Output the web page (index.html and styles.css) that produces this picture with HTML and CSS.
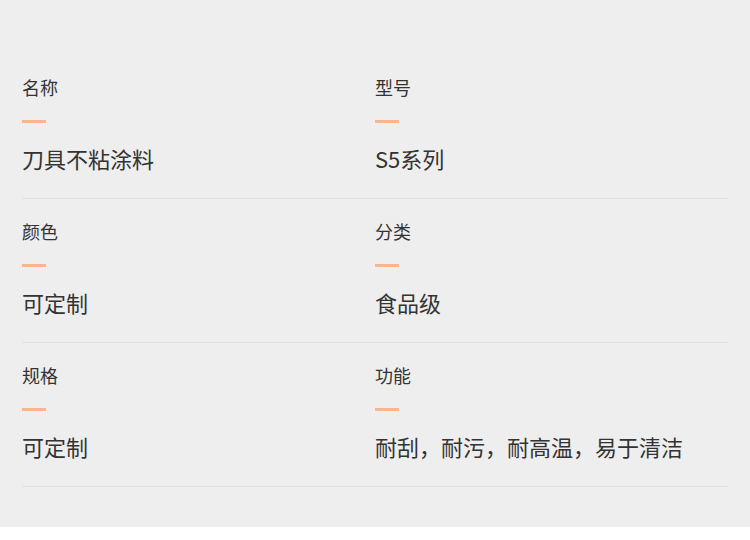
FILE: index.html
```html
<!DOCTYPE html>
<html lang="zh-CN">
<head>
<meta charset="utf-8">
<title>参数</title>
<link rel="stylesheet" href="styles.css">
</head>
<body>
<section class="specs">
  <div class="grid">
    <div class="cell">
      <div class="label">名称</div>
      <div class="bar"></div>
      <div class="value">刀具不粘涂料</div>
    </div>
    <div class="cell">
      <div class="label">型号</div>
      <div class="bar"></div>
      <div class="value">S5系列</div>
    </div>
    <div class="cell">
      <div class="label">颜色</div>
      <div class="bar"></div>
      <div class="value">可定制</div>
    </div>
    <div class="cell">
      <div class="label">分类</div>
      <div class="bar"></div>
      <div class="value">食品级</div>
    </div>
    <div class="cell">
      <div class="label">规格</div>
      <div class="bar"></div>
      <div class="value">可定制</div>
    </div>
    <div class="cell">
      <div class="label">功能</div>
      <div class="bar"></div>
      <div class="value">耐刮，耐污，耐高温，易于清洁</div>
    </div>
  </div>
</section>
</body>
</html>
```

FILE: styles.css
```css
html, body {
  margin: 0;
  padding: 0;
  background: #ffffff;
}
body {
  font-family: "Noto Sans CJK SC", "Noto Sans", sans-serif;
  color: #333333;
}
.specs {
  background: #eeeeee;
  padding: 55px 22px 40px;
}
.grid {
  display: grid;
  grid-template-columns: 353px 353px;
}
.cell {
  padding: 23px 0 29px;
  border-bottom: 1px solid #e2e2e2;
}
.label {
  font-size: 18px;
  line-height: 18px;
  color: #333333;
}
.bar {
  width: 24px;
  height: 3px;
  background: #ffb48c;
  margin: 24px 0;
}
.value {
  font-size: 22px;
  line-height: 22px;
  color: #333333;
}
```
